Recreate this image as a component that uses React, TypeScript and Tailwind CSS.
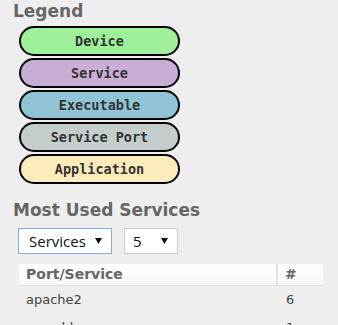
import React from 'react';

const LEGEND = [
  { label: 'Device', bg: 'bg-[#9ef19a]' },
  { label: 'Service', bg: 'bg-[#c8aed6]' },
  { label: 'Executable', bg: 'bg-[#8fc4d6]' },
  { label: 'Service Port', bg: 'bg-[#c5cccc]' },
  { label: 'Application', bg: 'bg-[#fcecbc]' },
];

const ROWS = [
  { name: 'apache2', count: 6 },
  { name: 'mysqld', count: 1 },
];

const Caret = () => (
  <svg width="7" height="6" viewBox="0 0 7 6" className="shrink-0">
    <path d="M0 0 H7 L3.5 6 Z" fill="#111" />
  </svg>
);

export default function App() {
  return (
    <div className="w-[338px] h-[325px] overflow-hidden bg-[#eeeeee] font-['DejaVu_Sans',sans-serif]">
      {/* Legend */}
      <h2 className="pl-[13px] h-[22px] leading-[22px] text-[17px] font-bold text-[#666]">Legend</h2>
      <div className="mt-[4px] ml-[19px] flex flex-col gap-[2px]">
        {LEGEND.map(item => (
          <div
            key={item.label}
            className={`w-[161px] h-[30px] rounded-full border-2 border-black ${item.bg} flex items-center justify-center font-['DejaVu_Sans_Mono',monospace] font-bold text-[13.5px] text-[#333]`}
          >
            {item.label}
          </div>
        ))}
      </div>

      {/* Most used services */}
      <h2 className="mt-[15px] pl-[13px] h-[22px] leading-[22px] text-[17px] font-bold text-[#666]">Most Used Services</h2>
      <div className="mt-[7px] ml-[18px] flex gap-[12px] font-['Open_Sans',sans-serif] text-[15px] text-[#111]">
        <div className="w-[94px] h-[26px] bg-white border border-[#82aae6] flex items-center justify-between pl-[10px] pr-[9px]">
          <span>Services</span>
          <Caret />
        </div>
        <div className="w-[54px] h-[26px] bg-white border border-[#cccccc] flex items-center justify-between pl-[8px] pr-[9px]">
          <span>5</span>
          <Caret />
        </div>
      </div>

      <div className="mt-[10px] ml-[19px] w-[304px]">
        <div className="flex h-[22px] bg-gradient-to-b from-white to-[#f7f7f7] border-b border-[#dddddd] text-[14px] font-bold text-[#666] leading-[21px]">
          <div className="w-[259px] pl-[7px] border-r-2 border-[#e4e4e4]">Port/Service</div>
          <div className="flex-1 pl-[7px]">#</div>
        </div>
        {ROWS.map(r => (
          <div key={r.name} className="flex h-[28px] leading-[28px] text-[13px] text-[#444]">
            <div className="w-[259px] pl-[7px]">{r.name}</div>
            <div className="flex-1 pl-[8px]">{r.count}</div>
          </div>
        ))}
      </div>
    </div>
  );
}
